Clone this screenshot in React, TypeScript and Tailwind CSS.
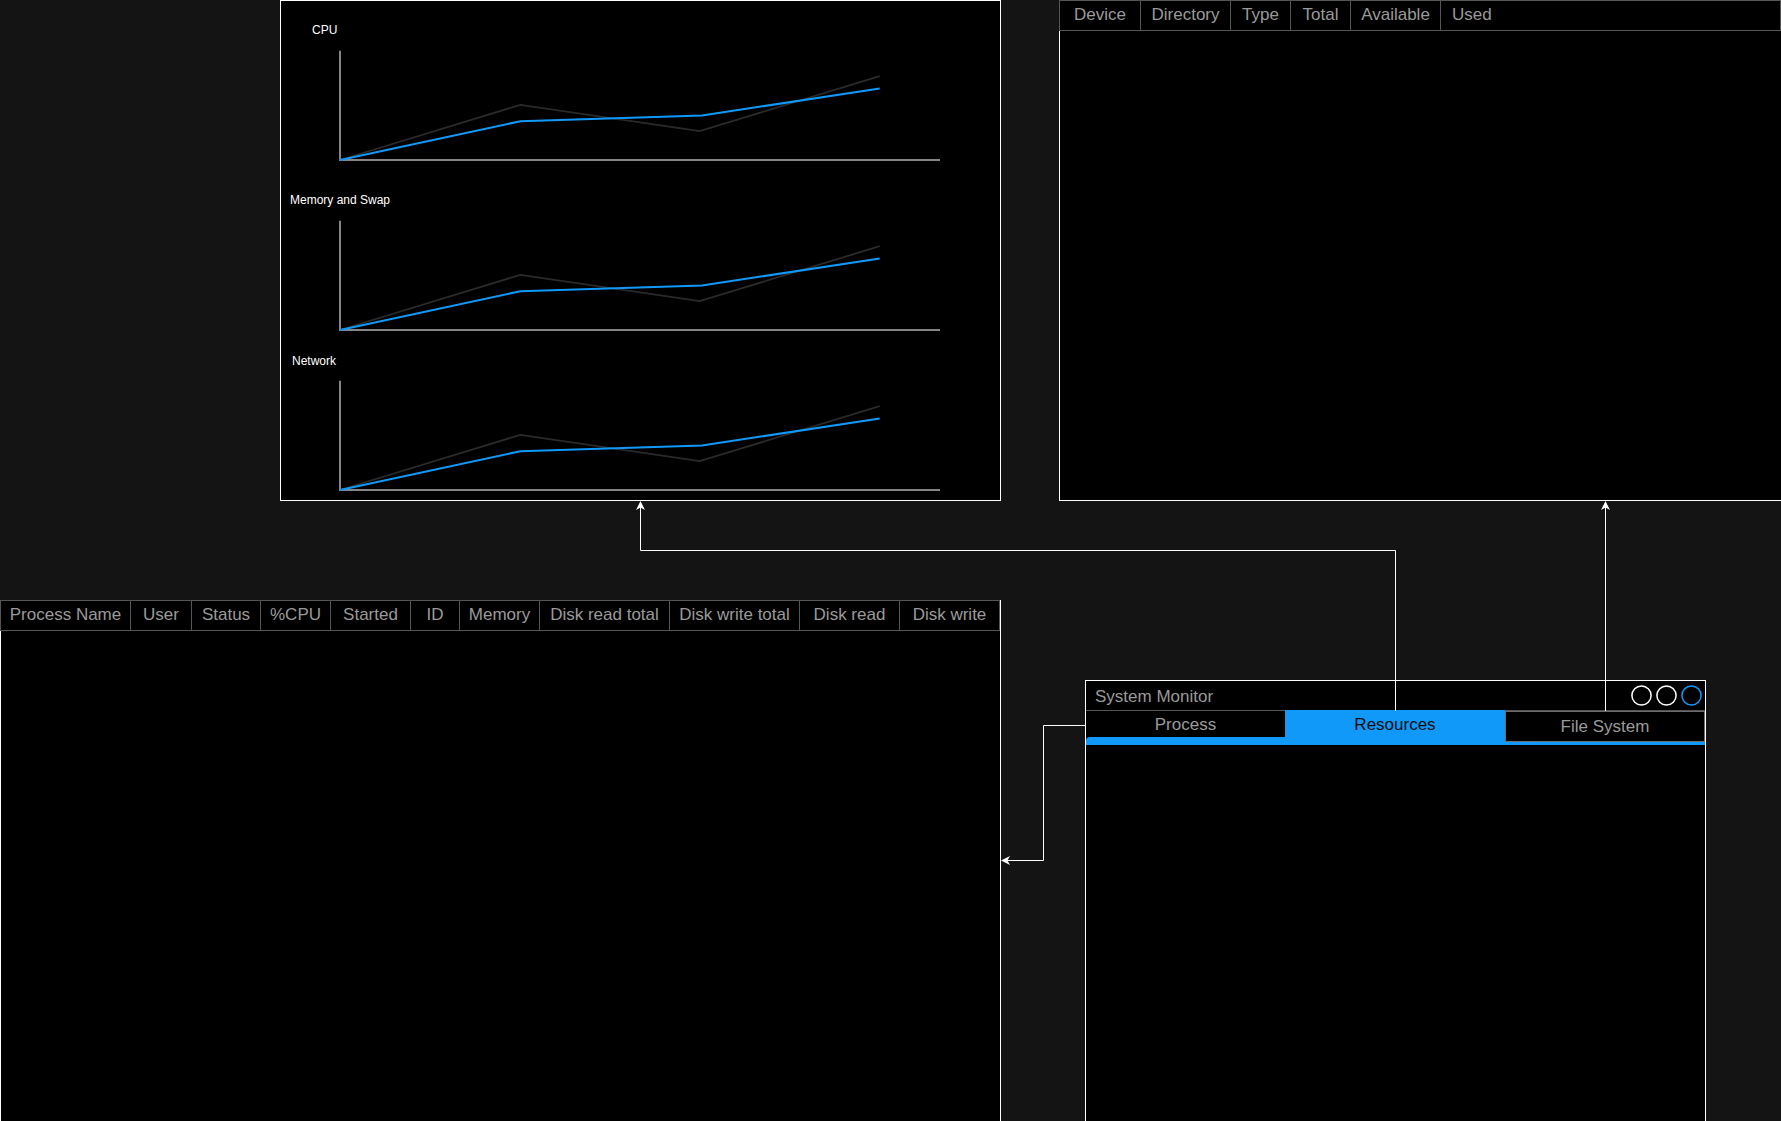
import React from 'react';

const BLUE = '#1199fa';

interface ChartProps {
  label: string;
  labelClass: string;
  chartClass: string;
}

// one resource chart: label, axes and two sample series
const Chart: React.FC<ChartProps> = ({ label, labelClass, chartClass }) => {
  return (
    <div className="flex flex-col">
      <div className={`text-[12px] leading-[12px] text-white ${labelClass}`}>{label}</div>
      <svg width={719} height={120} viewBox="0 0 719 120" className={chartClass}>
        <path d="M59 5.7 V115 H659" fill="none" stroke="#858585" strokeWidth={2} />
        <polyline points="59,115 239.4,59.8 418.7,86.2 598.7,31.2" fill="none" stroke="#2a2a2a" strokeWidth={1.8} />
        <polyline points="59,115 239.4,76.2 421,70.5 598.7,43.5" fill="none" stroke={BLUE} strokeWidth={2} />
      </svg>
    </div>
  );
};

const processColumns = [
  { label: 'Process Name', width: 'w-[130px]' },
  { label: 'User', width: 'w-[61px]' },
  { label: 'Status', width: 'w-[69px]' },
  { label: '%CPU', width: 'w-[70px]' },
  { label: 'Started', width: 'w-[80px]' },
  { label: 'ID', width: 'w-[49px]' },
  { label: 'Memory', width: 'w-[80px]' },
  { label: 'Disk read total', width: 'w-[130px]' },
  { label: 'Disk write total', width: 'w-[130px]' },
  { label: 'Disk read', width: 'w-[100px]' },
  { label: 'Disk write', width: 'w-[101px] border-r' },
];

const fsColumns = [
  { label: 'Device', width: 'w-[81px] justify-center' },
  { label: 'Directory', width: 'w-[90px] justify-center' },
  { label: 'Type', width: 'w-[60px] justify-center' },
  { label: 'Total', width: 'w-[60px] justify-center' },
  { label: 'Available', width: 'w-[90px] justify-center' },
  { label: 'Used', width: 'flex-1 border-r pl-[11px]' },
];

const Circle: React.FC<{ color: string }> = ({ color }) => (
  <svg width={21} height={21} viewBox="0 0 21 21">
    <circle cx={10.5} cy={10.5} r={9.6} fill="none" stroke={color} strokeWidth={1.5} />
  </svg>
);

const App: React.FC = () => {
  return (
    <div className="relative w-[1781px] h-[1121px] overflow-hidden bg-[#141414] font-['Liberation_Sans',Arial,sans-serif]">
      {/* Resources view: charts */}
      <div className="absolute left-[280px] top-0 w-[721px] h-[501px] border border-white bg-black flex flex-col">
        <Chart label="CPU" labelClass="ml-[31px] mt-[23px]" chartClass="mt-[9px]" />
        <Chart label="Memory and Swap" labelClass="ml-[9px] mt-[29px]" chartClass="mt-[9px]" />
        <Chart label="Network" labelClass="ml-[11px] mt-[20px]" chartClass="mt-[8px]" />
      </div>

      {/* File System view */}
      <div className="absolute left-[1059px] top-0 w-[723px] h-[501px] flex flex-col">
        <div className="flex w-[722px] h-[31px] bg-black">
          {fsColumns.map(({ label, width }) => (
            <div
              key={label}
              className={`flex items-center border-l border-y border-[#555] pb-[2px] text-[17px] text-[#9a9a9a] ${width}`}
            >
              {label}
            </div>
          ))}
        </div>
        <div className="flex-1 bg-black border-l border-r border-b border-white" />
      </div>

      {/* Process view */}
      <div className="absolute left-0 top-[600px] w-[1001px] h-[540px] flex flex-col border-r border-white">
        <div className="flex w-[1000px] h-[31px] bg-black">
          {processColumns.map(({ label, width }) => (
            <div
              key={label}
              className={`flex items-center justify-center border-l border-y border-[#555] pb-[2px] text-[17px] text-[#9a9a9a] ${width}`}
            >
              {label}
            </div>
          ))}
        </div>
        <div className="flex-1 bg-black border-l border-white" />
      </div>

      {/* System Monitor window */}
      <div className="absolute left-[1085px] top-[680px] w-[621px] h-[460px] flex flex-col border border-white bg-black">
        <div className="flex h-[30px] items-center justify-between border-b border-[#555] pl-[9px] pr-[3px]">
          <span className="pt-[2px] text-[17px] text-[#9a9a9a]">System Monitor</span>
          <div className="flex items-center gap-[4px]">
            <Circle color="#ffffff" />
            <Circle color="#ffffff" />
            <Circle color={BLUE} />
          </div>
        </div>
        <div className="flex h-[34px]">
          <div className="flex w-[199px] flex-col">
            <div className="flex h-[26px] items-center justify-center pt-[2px] text-[17px] text-[#9a9a9a]">Process</div>
            <div className="h-[8px] rounded-tl-[4px] bg-[#1199fa]" />
          </div>
          <div className="flex w-[220px] flex-col bg-[#1199fa] -mt-px h-[35px]">
            <div className="flex h-[27px] items-center justify-center pt-[3px] text-[17px] text-[#0d0d0d]">Resources</div>
          </div>
          <div className="flex flex-1 flex-col">
            <div className="flex h-[31px] items-center justify-center border border-[#6b6b6b] text-[17px] text-[#9a9a9a]">
              File System
            </div>
            <div className="h-[3px] bg-[#1199fa]" />
          </div>
        </div>
        <div className="flex-1" />
      </div>

      {/* connectors */}
      <svg className="absolute inset-0 pointer-events-none" width={1781} height={1121}>
        <g fill="none" stroke="#ffffff" strokeWidth={1}>
          <path d="M640.5 507 V550.5 H1395.5 V711" />
          <path d="M1605.5 507 V711" />
          <path d="M1085 725.5 H1043.5 V860.5 H1007" />
        </g>
        <g fill="#ffffff">
          <path d="M640.5 501 L645 510 L640.5 507.5 L636 510 Z" />
          <path d="M1605.5 501 L1610 510 L1605.5 507.5 L1601 510 Z" />
          <path d="M1001 860.5 L1010 856 L1007.5 860.5 L1010 865 Z" />
        </g>
      </svg>
    </div>
  );
};

export default App;
